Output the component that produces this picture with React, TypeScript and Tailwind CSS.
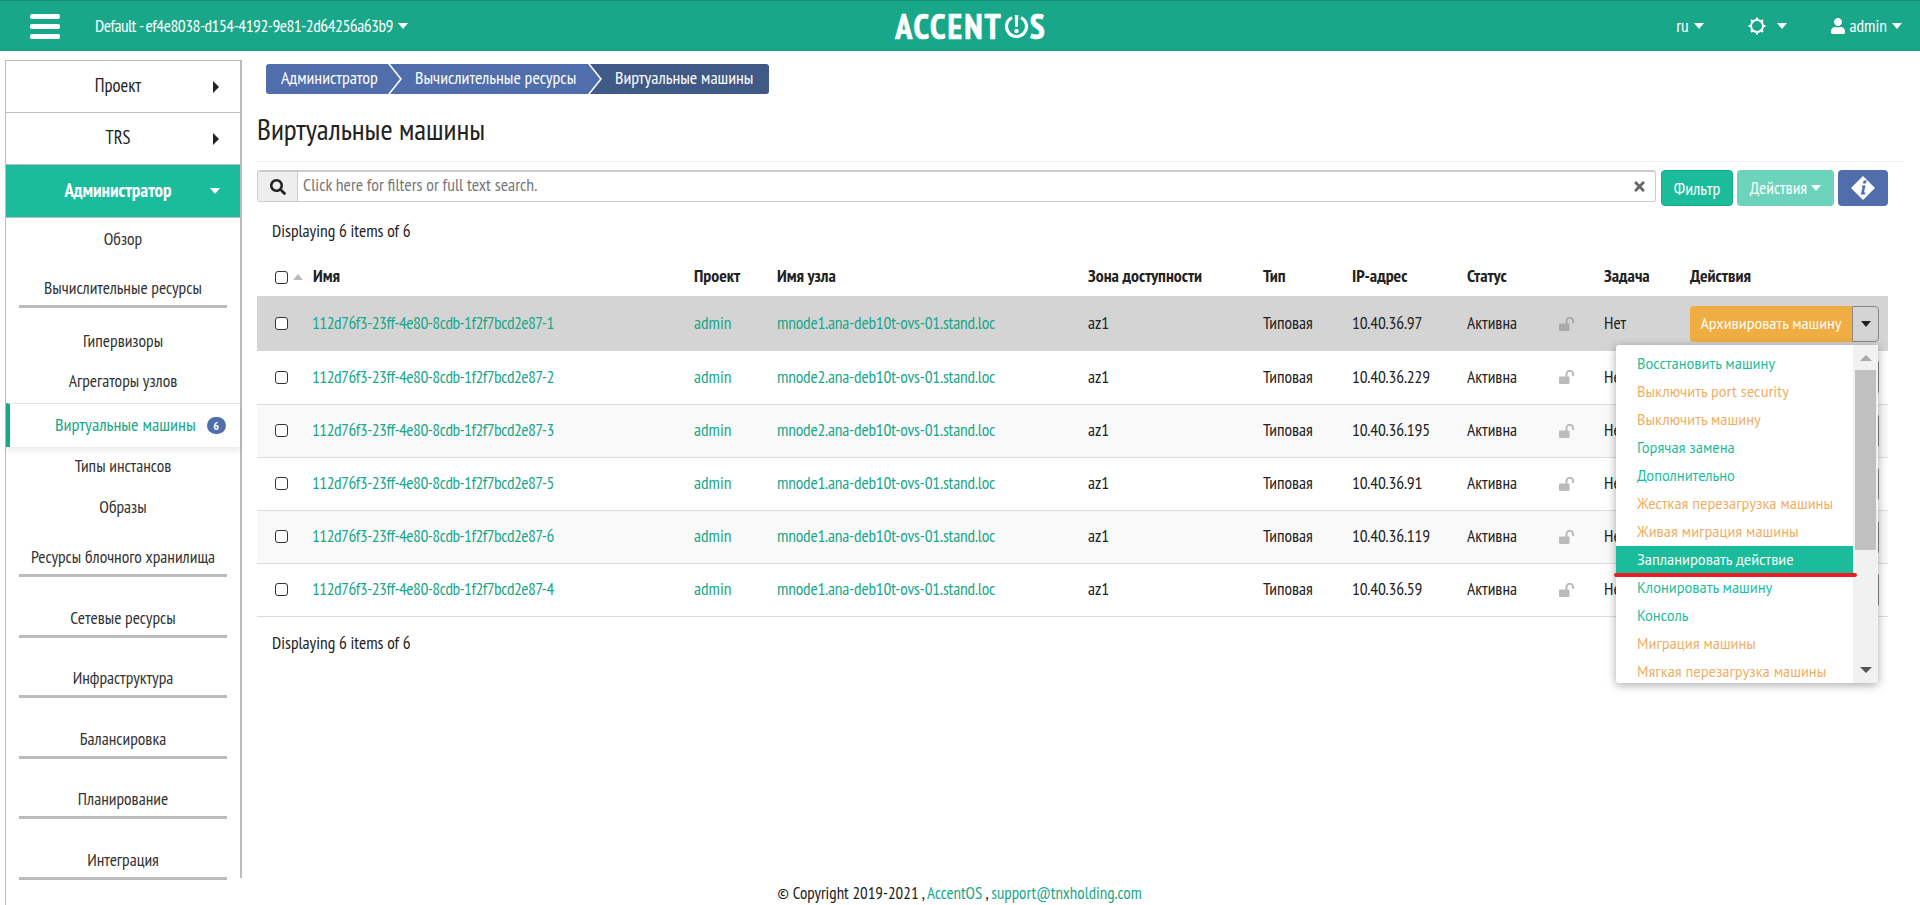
import { FaSearch, FaTimes, FaUser } from "react-icons/fa";

const rows = [
  { id: "112d76f3-23ff-4e80-8cdb-1f2f7bcd2e87-1", node: "mnode1.ana-deb10t-ovs-01.stand.loc", ip: "10.40.36.97" },
  { id: "112d76f3-23ff-4e80-8cdb-1f2f7bcd2e87-2", node: "mnode2.ana-deb10t-ovs-01.stand.loc", ip: "10.40.36.229" },
  { id: "112d76f3-23ff-4e80-8cdb-1f2f7bcd2e87-3", node: "mnode2.ana-deb10t-ovs-01.stand.loc", ip: "10.40.36.195" },
  { id: "112d76f3-23ff-4e80-8cdb-1f2f7bcd2e87-5", node: "mnode1.ana-deb10t-ovs-01.stand.loc", ip: "10.40.36.91" },
  { id: "112d76f3-23ff-4e80-8cdb-1f2f7bcd2e87-6", node: "mnode1.ana-deb10t-ovs-01.stand.loc", ip: "10.40.36.119" },
  { id: "112d76f3-23ff-4e80-8cdb-1f2f7bcd2e87-4", node: "mnode1.ana-deb10t-ovs-01.stand.loc", ip: "10.40.36.59" },
];

const menuItems = [
  { label: "Восстановить машину", tone: "text-[#1abc9c]" },
  { label: "Выключить port security", tone: "text-[#f0ad62]" },
  { label: "Выключить машину", tone: "text-[#f0ad62]" },
  { label: "Горячая замена", tone: "text-[#1abc9c]" },
  { label: "Дополнительно", tone: "text-[#1abc9c]" },
  { label: "Жесткая перезагрузка машины", tone: "text-[#f0ad62]" },
  { label: "Живая миграция машины", tone: "text-[#f0ad62]" },
  { label: "Запланировать действие", tone: "bg-[#1abc9c] text-white" },
  { label: "Клонировать машину", tone: "text-[#1abc9c]" },
  { label: "Консоль", tone: "text-[#1abc9c]" },
  { label: "Миграция машины", tone: "text-[#f0ad62]" },
  { label: "Мягкая перезагрузка машины", tone: "text-[#f0ad62]" },
];

const headers = ["Проект", "Имя узла", "Зона доступности", "Тип", "IP-адрес", "Статус", "", "Задача", "Действия"];

function CaretDown({ className }: { className: string }) {
  return <span className={"inline-block w-0 h-0 border-x-[5px] border-x-transparent border-t-[6px] " + className} />;
}

function CaretRight() {
  return <span className="block w-0 h-0 ml-[2px] border-y-[6px] border-y-transparent border-l-[6px] border-l-[#222]" />;
}

function Gear() {
  return (
    <svg width="18" height="18" viewBox="0 0 18 18" fill="none" stroke="white">
      <circle cx="9" cy="9" r="6" strokeWidth="2" />
      <path d="M9 0.5v2.5M9 15v2.5M0.5 9H3M15 9h2.5M3 3l1.8 1.8M13.2 13.2L15 15M15 3l-1.8 1.8M4.8 13.2L3 15" strokeWidth="2" />
    </svg>
  );
}

function PowerMark() {
  return (
    <svg width="25" height="25" viewBox="0 0 25 25" fill="none" className="mx-[1px]">
      <path d="M8 3.6A10 10 0 1 0 17 3.6" stroke="white" strokeWidth="3.2" />
      <path d="M10.7 1h3.6l-.6 12h-2.4z" fill="white" />
      <circle cx="12.5" cy="17" r="2.2" fill="white" />
    </svg>
  );
}

function InfoMark() {
  return (
    <svg width="24" height="24" viewBox="0 0 24 24">
      <path d="M12 0l12 12-12 12L0 12z" fill="white" />
      <path d="M12.6 4.6h3l-.6 3h-3zM11.6 9.4h3l-1.7 7.2h1.5l-.4 2H9.8l1.8-7.4h-1.2z" fill="#4f6eab" />
    </svg>
  );
}

function OpenLock({ className }: { className: string }) {
  return (
    <svg width="16" height="14" viewBox="0 0 16 14" className={className}>
      <rect x="0" y="6.5" width="10.5" height="7.5" rx="1" fill="currentColor" />
      <path d="M7.5 7V4a3.3 3.3 0 0 1 6.6 0v2" fill="none" stroke="currentColor" strokeWidth="2" />
    </svg>
  );
}

function TopItem({ label, open, active }: { label: string; open?: boolean; active?: boolean }) {
  return (
    <div className={"flex items-center pl-[20px] pr-[20px] border-b border-[#bbb] " + (active ? "h-[53px] bg-[#1abc9c] text-white font-bold text-[19px]" : "h-[52px] bg-white text-[#222] text-[18.5px]")}>
      <span className="flex-1 text-center pb-[1px]">{label}</span>
      <span className="w-[10px] flex justify-center">
        {open ? <CaretDown className="border-t-white" /> : <CaretRight />}
      </span>
    </div>
  );
}

function SubItem({ label, h }: { label: string; h: string }) {
  return <div className={"flex items-center justify-center text-[17.5px] text-[#333] " + h}>{label}</div>;
}

function GroupItem({ label, h }: { label: string; h: string }) {
  return (
    <div className={"flex flex-col justify-end items-center text-[17.5px] text-[#333] " + h}>
      <span className="h-[20px] leading-[20px] mb-[7px]">{label}</span>
      <span className="block w-[208px] h-[3px] bg-[#bbb]" />
    </div>
  );
}

function ActionButton({ menu }: { menu?: boolean }) {
  return (
    <div className="relative flex w-[189px] h-[36px]">
      <button className="w-[162px] h-full bg-[#f0ad42] rounded-l-[4px] text-white font-['PT_Sans','Roboto',sans-serif] text-[14.4px] whitespace-nowrap">
        Архивировать машину
      </button>
      <button className="flex-1 h-full flex items-center justify-center border border-[#888] rounded-r-[4px]">
        <CaretDown className="border-t-[#222]" />
      </button>
      {menu && (
        <div className="absolute top-[39px] right-[1px] z-10 w-[262px] h-[338px] flex bg-white rounded-[3px] shadow-[0_2px_10px_rgba(0,0,0,0.35)] font-['PT_Sans','Roboto',sans-serif] text-[14.5px]">
          <div className="flex-1 pt-[5px] overflow-hidden">
            {menuItems.map((m) => (
              <div key={m.label} className={"h-[28px] leading-[28px] pl-[21px] whitespace-nowrap " + m.tone}>
                {m.label}
              </div>
            ))}
          </div>
          <div className="w-[25px] bg-[#f1f1f1] flex flex-col items-center">
            <span className="mt-[10px] w-0 h-0 border-x-[6px] border-x-transparent border-b-[6px] border-b-[#aaa]" />
            <span className="mt-[9px] w-[21px] h-[180px] bg-[#c0c0c0]" />
            <span className="mt-auto mb-[10px] w-0 h-0 border-x-[6px] border-x-transparent border-t-[6px] border-t-[#555]" />
          </div>
          <span className="absolute left-[-2px] top-[228px] w-[243px] h-[4px] rounded-full bg-[#ed1c24]" />
        </div>
      )}
    </div>
  );
}

export default function App() {
  return (
    <div className="min-h-[905px] h-[905px] flex flex-col bg-white overflow-hidden font-['PT_Sans_Narrow','Liberation_Sans',sans-serif] text-[17.5px] text-[#222]">
      {/* Top bar */}
      <header className="h-[51px] shrink-0 flex items-center bg-[#19a78a] border-t border-[#14907a] text-white">
        <div className="flex-1 flex items-center pl-[30px]">
          <div className="w-[30px] flex flex-col gap-[5px]">
            <span className="h-[5px] rounded-[2px] bg-white" />
            <span className="h-[5px] rounded-[2px] bg-white" />
            <span className="h-[5px] rounded-[2px] bg-white" />
          </div>
          <span className="ml-[35px] tracking-[-0.5px]">Default - ef4e8038-d154-4192-9e81-2d64256a63b9</span>
          <CaretDown className="ml-[5px] border-t-white" />
        </div>
        <div className="ml-[10px] flex items-center text-[34px] leading-none font-bold tracking-[2px] [-webkit-text-stroke:0.6px_white]">
          ACCENT
          <PowerMark />
          S
        </div>
        <div className="flex-1 flex items-center justify-end pr-[18px]">
          <span>ru</span>
          <CaretDown className="ml-[5px] border-t-white" />
          <span className="ml-[44px]"><Gear /></span>
          <CaretDown className="ml-[11px] border-t-white" />
          <FaUser className="ml-[44px] w-[14px] h-[16px]" />
          <span className="ml-[5px]">admin</span>
          <CaretDown className="ml-[5px] border-t-white" />
        </div>
      </header>

      <div className="flex-1 flex min-h-0">
        {/* Sidebar */}
        <aside className="ml-[5px] mt-[9px] w-[237px] shrink-0 border-l border-[#bbb]">
          <div className="h-[818px] border-r-2 border-t border-[#bbb]">
            <TopItem label="Проект" />
            <TopItem label="TRS" />
            <TopItem label="Администратор" open active />
            <SubItem label="Обзор" h="h-[44px] pb-[2px]" />
            <GroupItem label="Вычислительные ресурсы" h="h-[46px]" />
            <SubItem label="Гипервизоры" h="h-[54px] pt-[12px]" />
            <SubItem label="Агрегаторы узлов" h="h-[41px] pb-[2px]" />
            <div className="h-[44px] flex items-center pl-[45px] gap-[11px] border-t border-[#e4e4e4] border-l-4 border-l-[#19a78a] text-[#19a78a] text-[18.2px] shadow-[0_4px_6px_rgba(0,0,0,0.08)]">
              <span className="pb-[2px]">Виртуальные машины</span>
              <span className="w-[19px] h-[17px] rounded-full bg-[#4f6eab] text-white text-[12px] font-bold flex items-center justify-center">6</span>
            </div>
            <SubItem label="Типы инстансов" h="h-[41px] pb-[2px]" />
            <SubItem label="Образы" h="h-[40px] pb-[2px]" />
            <GroupItem label="Ресурсы блочного хранилища" h="h-[49px]" />
            <GroupItem label="Сетевые ресурсы" h="h-[61px]" />
            <GroupItem label="Инфраструктура" h="h-[60px]" />
            <GroupItem label="Балансировка" h="h-[61px]" />
            <GroupItem label="Планирование" h="h-[60px]" />
            <GroupItem label="Интеграция" h="h-[61px]" />
          </div>
        </aside>

        {/* Content */}
        <main className="flex-1 min-w-0 flex flex-col pl-[15px] pr-[16px]">
          <nav className="ml-[9px] mt-[13px] flex w-fit h-[30px] rounded-[3px] overflow-hidden text-white text-[17.9px] leading-[28px]">
            <span className="w-[134px] pl-[15px] bg-[#4f6eab] [clip-path:polygon(0_0,calc(100%-12px)_0,100%_50%,calc(100%-12px)_100%,0_100%)]">Администратор</span>
            <span className="w-[210px] -ml-[10px] pl-[25px] bg-[#4f6eab] [clip-path:polygon(0_0,calc(100%-12px)_0,100%_50%,calc(100%-12px)_100%,0_100%,12px_50%)]">Вычислительные ресурсы</span>
            <span className="w-[179px] -ml-[10px] pl-[25px] bg-[#3f5a87] [clip-path:polygon(0_0,100%_0,100%_100%,0_100%,12px_50%)]">Виртуальные машины</span>
          </nav>

          <div className="mt-[20px] pb-[15px] border-b border-[#eee]">
            <h1 className="h-[32px] leading-[30px] text-[29.5px] text-[#222]">Виртуальные машины</h1>
          </div>

          <div className="mt-[8px] mr-[16px] flex items-start">
            <div className="flex-1 h-[32px] flex items-stretch border border-t-2 border-[#ccc] rounded-[3px] bg-white">
              <span className="w-[40px] shrink-0 flex items-center justify-center bg-[#eee] border-r border-[#ccc]">
                <FaSearch className="w-[16px] h-[16px] text-[#222]" />
              </span>
              <span className="flex-1 flex items-center pl-[5px] pb-[2px] text-[#777] text-[17.8px]">Click here for filters or full text search.</span>
              <span className="flex items-center pr-[8px]">
                <FaTimes className="w-[15px] h-[15px] text-[#666]" />
              </span>
            </div>
            <button className="ml-[5px] w-[72px] h-[36px] rounded-[4px] bg-[#1abc9c] border border-[#18a689] text-white text-[18px]">Фильтр</button>
            <button className="ml-[4px] w-[97px] h-[36px] rounded-[4px] bg-[#6bd4bb] text-white text-[17.5px] flex items-center justify-center gap-[4px]">
              Действия
              <CaretDown className="border-t-white" />
            </button>
            <button className="ml-[4px] w-[50px] h-[36px] rounded-[4px] bg-[#4f6eab] flex items-center justify-center">
              <InfoMark />
            </button>
          </div>

          <div className="mr-[16px]">
            <p className="mt-[15px] pl-[15px] h-[20px] leading-[20px]">Displaying 6 items of 6</p>

            <table className="mt-[17px] w-full table-fixed">
              <colgroup>
                <col className="w-[48px]" />
                <col className="w-[381px]" />
                <col className="w-[83px]" />
                <col className="w-[311px]" />
                <col className="w-[175px]" />
                <col className="w-[89px]" />
                <col className="w-[115px]" />
                <col className="w-[92px]" />
                <col className="w-[45px]" />
                <col className="w-[86px]" />
                <col />
              </colgroup>
              <thead>
                <tr className="h-[38px] text-left text-[17.8px]">
                  <th className="pl-[18px]">
                    <span className="flex items-center gap-[5px]">
                      <input type="checkbox" className="appearance-none w-[13px] h-[13px] border border-[#333] rounded-[3px] bg-white" />
                      <span className="w-0 h-0 border-x-[5px] border-x-transparent border-b-[6px] border-b-[#bbb]" />
                    </span>
                  </th>
                  <th className="px-[8px] pb-[1px] font-bold">Имя</th>
                  {headers.map((h, i) => (
                    <th key={i} className="px-[8px] pb-[1px] font-bold">{h}</th>
                  ))}
                </tr>
              </thead>
              <tbody>
                {rows.map((r, i) => (
                  <tr key={r.id} className={i === 0 ? "h-[55px] bg-[#d4d4d4]" : i % 2 === 0 ? "h-[53px] bg-[#f9f9f9] border-b border-[#ddd]" : "h-[53px] bg-white border-b border-[#ddd]"}>
                    <td className="pl-[18px]">
                      <input type="checkbox" className="block appearance-none w-[13px] h-[13px] border border-[#333] rounded-[3px] bg-white" />
                    </td>
                    <td className="px-[7px] pb-[1px] text-[#19a78a] whitespace-nowrap tracking-[-0.52px]">{r.id}</td>
                    <td className="px-[8px] pb-[1px] text-[#19a78a]">admin</td>
                    <td className="px-[8px] pb-[1px] text-[#19a78a] whitespace-nowrap tracking-[-0.2px]">{r.node}</td>
                    <td className="px-[8px] pb-[1px]">az1</td>
                    <td className="px-[8px] pb-[1px]">Типовая</td>
                    <td className="px-[8px] pb-[1px] tracking-[-0.2px]">{r.ip}</td>
                    <td className="px-[8px] pb-[1px]">Активна</td>
                    <td className="px-[8px]">
                      <OpenLock className={i === 0 ? "text-[#aaa]" : "text-[#bbb]"} />
                    </td>
                    <td className="px-[8px] pb-[1px]">Нет</td>
                    <td className="px-[8px]">
                      <ActionButton menu={i === 0} />
                    </td>
                  </tr>
                ))}
              </tbody>
            </table>

            <p className="mt-[16px] pl-[15px] h-[20px] leading-[20px]">Displaying 6 items of 6</p>
          </div>

          <footer className="mt-auto h-[24px] pr-[242px] text-center text-[17px]">
            © Copyright 2019-2021 , <span className="text-[#19a78a]">AccentOS</span> , <span className="text-[#19a78a]">support@tnxholding.com</span>
          </footer>
        </main>
      </div>
    </div>
  );
}
